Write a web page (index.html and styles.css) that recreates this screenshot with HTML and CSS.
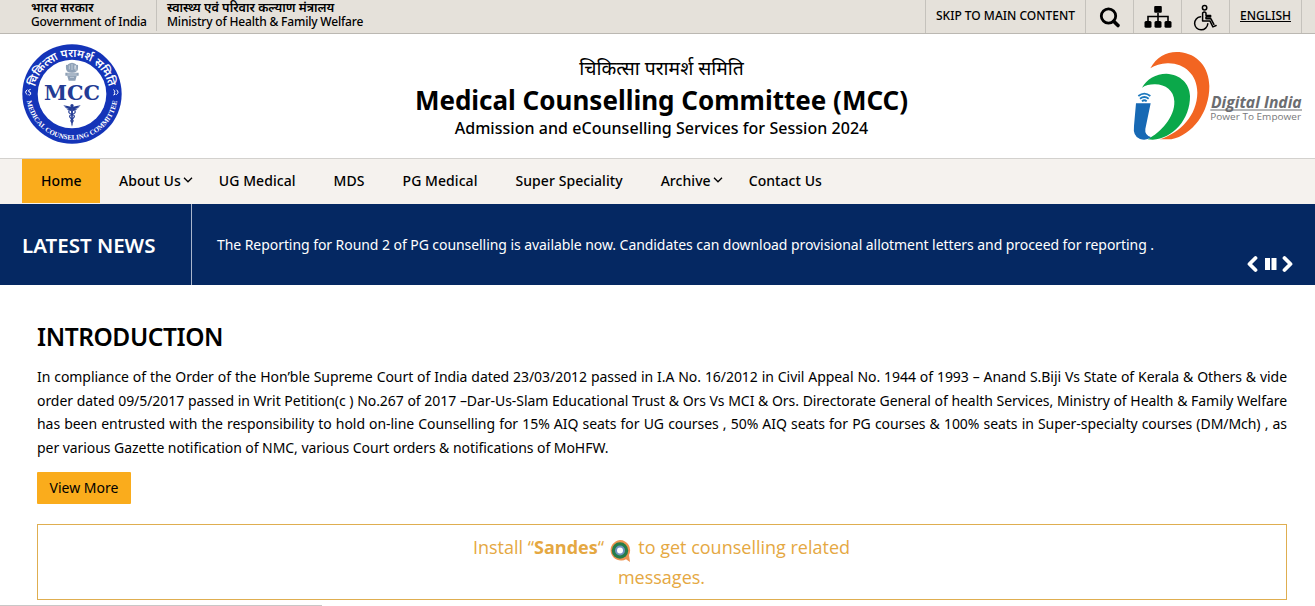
FILE: index.html
```html
<!DOCTYPE html>
<html lang="en">
<head>
  <meta charset="UTF-8">
  <meta name="viewport" content="width=device-width, initial-scale=1.0">
  <title>Medical Counselling Committee (MCC)</title>
  <link rel="stylesheet" href="styles.css">
</head>
<body>
  <div class="topbar">
    <div class="gov">
      <a class="gov-item gov-india"><span class="hi" lang="hi">भारत सरकार</span><span class="en">Government of India</span></a>
      <a class="gov-item gov-ministry"><span class="hi" lang="hi">स्वास्थ्य एवं परिवार कल्याण मंत्रालय</span><span class="en">Ministry of Health &amp; Family Welfare</span></a>
    </div>
    <ul class="tools">
      <li class="skip"><a>SKIP TO MAIN CONTENT</a></li>
      <li class="tool">
        <svg width="24" height="24" viewBox="0 0 24 24"><circle cx="10.500" cy="11" r="7.2" fill="none" stroke="#000" stroke-width="2.8"/><path d="M15.7 16.2L20 20.500" stroke="#000" stroke-width="3.6" stroke-linecap="round"/></svg>
      </li>
      <li class="tool">
        <svg width="28" height="24" viewBox="0 0 28 24"><path d="M14 8v8M4 16v-4.500h20V16" fill="none" stroke="#000" stroke-width="1.6"/><rect x="10.200" y="1" width="7.600" height="6.800" rx="1"/><rect x="0.500" y="16" width="7" height="6.800" rx="1.500"/><rect x="10.500" y="16" width="7" height="6.800" rx="1.500"/><rect x="20.500" y="16" width="7" height="6.800" rx="1.500"/></svg>
      </li>
      <li class="tool">
        <svg width="26" height="28" viewBox="0 0 26 28"><g fill="none" stroke="#000" stroke-width="1.5" stroke-linecap="round" stroke-linejoin="round"><circle cx="11.600" cy="4.800" r="2.200"/><path d="M9.600 10v7.900h7.300l3 6 3.200-1.400M13 10v2.400h4.600v1.600H13v1.800h5l2.900 5.500M9.600 10q1.700-2 3.400 0"/><path d="M7.600 13.700A6.600 6.600 0 1 0 14.800 20.800"/></g></svg>
      </li>
      <li class="lang"><a>ENGLISH</a></li>
    </ul>
  </div>

  <header class="header">
    <svg class="mcc" width="120" height="112" viewBox="0 0 360 336">
      <defs>
        <path id="arcTop" d="M70 190A112 112 0 1 1 290 190"/>
        <path id="arcBottom" d="M43 168A137 137 0 0 0 317 168"/>
      </defs>
      <circle cx="180" cy="168" r="149" fill="#1434b8"/>
      <circle cx="180" cy="168" r="103" fill="#fff"/>
      <text class="ring-hi" lang="hi"><textPath href="#arcTop" startOffset="50%" text-anchor="middle">चिकित्सा परामर्श समिति</textPath></text>
      <text class="ring-en"><textPath href="#arcBottom" startOffset="50%" text-anchor="middle">MEDICAL COUNSELING COMMITTEE</textPath></text>
      <g fill="none" stroke="#fff" stroke-width="3"><path d="M46 155q-10 8 0 15M56 154q-10 2-5 8 7-1 5 7-2 4-7 1M304 155q8 4 3 9 6 6-3 7M313 155q10 8 0 15"/></g>
      <g fill="#8fa1b6">
        <path d="M168 79q12-9 24 0l1 22q-13 6-26 0zM162 81q6-3 8 3l-2 18q-8-5-6-21zM198 81q-6-3-8 3l2 18q8-5 6-21z"/>
        <path d="M160 104h40v9h-40zM166 114h28l-4 14h-20z"/>
      </g>
      <path d="M172 82v12M180 78v18M188 82v12M166 108h28M174 118h12" stroke="#dbe2ea" stroke-width="2"/>
      <text class="mcc-name" x="96" y="186" textLength="168" lengthAdjust="spacingAndGlyphs">MCC</text>
      <g fill="#233b94">
        <circle cx="180" cy="203" r="5"/>
        <path d="M177 207h6l-1 52-2 7-2-7zM154 202q14 2 23 4v13q-11-1-13-5 5 0 7-1-10-1-13-5 4 0 7 0-9-1-11-6zM206 202q-14 2-23 4v13q11-1 13-5-5 0-7-1 10-1 13-5-4 0-7 0 9-1 11-6z"/>
        <path d="M172 218q-6 7 8 11t1 14q-9 5 0 11M188 218q6 7-8 11t-1 14q9 5 0 11" fill="none" stroke="#233b94" stroke-width="3.500"/>
      </g>
    </svg>
    <div class="title">
      <p class="title-hi" lang="hi">चिकित्सा परामर्श समिति</p>
      <h1>Medical Counselling Committee (MCC)</h1>
      <p class="title-sub">Admission and eCounselling Services for Session 2024</p>
    </div>
    <svg class="digital" width="195" height="108" viewBox="0 0 585 324">
      <path d="M91 79C111 42 143 27 178 30C232 35 267 75 268 132C269 211 217 279 154 292L120 292C183 270 231 220 232 152C232 96 190 62 142 64Q112 65 91 79Z" fill="#f26522"/>
      <path d="M66 137C80 111 108 95 139 95C181 97 209 125 210 162C211 232 158 290 98 293L83 292C121 272 165 226 163 178C162 145 135 126 103 127Q82 127 66 137Z" fill="#0ba84a"/>
      <path d="M48 184H92L76 261Q73 279 94 286Q78 297 60 291Q38 283 42 251Z" fill="#1769b4"/>
      <g fill="none" stroke="#1b78be" stroke-width="5.500"><path d="M55 162Q73 148 91 162M60 170Q73 160 86 170M66 178Q73 171 80 178"/></g>
      <text class="digital-name" x="273" y="197" textLength="272" lengthAdjust="spacingAndGlyphs">Digital India</text>
      <path d="M271 204H546" stroke="#6b6c70" stroke-width="3"/>
      <text class="digital-tag" x="271" y="233" textLength="272" lengthAdjust="spacingAndGlyphs">Power To Empower</text>
    </svg>
  </header>

  <nav class="nav">
    <a class="active">Home</a>
    <a class="has-sub">About Us<svg width="10" height="6" viewBox="0 0 10 6"><path d="M1 .8l4 4 4-4"/></svg></a>
    <a>UG Medical</a>
    <a>MDS</a>
    <a>PG Medical</a>
    <a>Super Speciality</a>
    <a class="has-sub">Archive<svg width="10" height="6" viewBox="0 0 10 6"><path d="M1 .8l4 4 4-4"/></svg></a>
    <a>Contact Us</a>
  </nav>

  <section class="news">
    <h2>LATEST NEWS</h2>
    <p>The Reporting for Round 2 of PG counselling is available now. Candidates can download provisional allotment letters and proceed for reporting .</p>
    <svg class="controls" width="48" height="18" viewBox="0 0 48 18"><path d="M9.500 3L3.500 9l6 6M38.500 3l6 6-6 6" fill="none" stroke="#fff" stroke-width="3.800" stroke-linecap="round" stroke-linejoin="round"/><path d="M19 3h5v12h-5zM25.500 3h5v12h-5z" fill="#fff"/></svg>
  </section>

  <main class="content">
    <h2>INTRODUCTION</h2>
    <div class="intro">
      <p class="full">In compliance of the Order of the Hon’ble Supreme Court of India dated 23/03/2012 passed in I.A No. 16/2012 in Civil Appeal No. 1944 of 1993 – Anand S.Biji Vs State of Kerala &amp; Others &amp; vide</p>
      <p class="full">order dated 09/5/2017 passed in Writ Petition(c ) No.267 of 2017 –Dar-Us-Slam Educational Trust &amp; Ors Vs MCI &amp; Ors. Directorate General of health Services, Ministry of Health &amp; Family Welfare</p>
      <p class="full">has been entrusted with the responsibility to hold on-line Counselling for 15% AIQ seats for UG courses , 50% AIQ seats for PG courses &amp; 100% seats in Super-specialty courses (DM/Mch) , as</p>
      <p>per various Gazette notification of NMC, various Court orders &amp; notifications of MoHFW.</p>
    </div>
    <a class="more">View More</a>
    <div class="sandes">
      <p>Install “<b>Sandes</b>“
        <svg width="22" height="24" viewBox="0 0 22 24"><path d="M11 1a10.300 10.300 0 1 0 6 19.200L21 23l-1-7A10.300 10.300 0 0 0 11 1z" fill="#ee9350"/><circle cx="11" cy="11.500" r="8.200" fill="#267d48"/><circle cx="11" cy="11.500" r="5" fill="#6f93bd"/><circle cx="11" cy="11.500" r="3" fill="#fff"/></svg>
        to get counselling related<br>messages.</p>
    </div>
  </main>
  <div class="strip"></div>
</body>
</html>
```
FILE: styles.css
```css
* {
  box-sizing: border-box;
  margin: 0;
  padding: 0;
}

body {
  height: 606px;
  overflow: hidden;
  display: flex;
  flex-direction: column;
  font-family: "Noto Sans", "Open Sans", sans-serif;
  color: #000;
  background: #fff;
}

svg {
  display: block;
  flex: none;
}

/* top bar */
.topbar {
  display: flex;
  justify-content: space-between;
  flex: none;
  height: 34px;
  background: #e5e1da;
  border-bottom: 1px solid #bbb8b2;
}

.gov {
  display: flex;
  height: 31px;
  padding-left: 22px;
}

.gov-item {
  display: flex;
  flex-direction: column;
  padding: 0 10px;
  font-size: 12px;
  font-weight: 500;
  white-space: nowrap;
}

.gov-india {
  width: 135px;
  padding-left: 9px;
  border-right: 1px solid #c5c2bc;
}

.gov-item .hi {
  height: 14px;
  font-size: 12.6px;
  font-weight: 600;
  line-height: 16px;
}

.gov-item .en {
  letter-spacing: -0.18px;
  line-height: 15px;
}

.tools {
  display: flex;
  list-style: none;
  margin-right: 13px;
  border-right: 1px solid #c5c2bc;
}

.tools li {
  display: flex;
  align-items: center;
  justify-content: center;
  width: 48px;
  border-left: 1px solid #c5c2bc;
  font-size: 12px;
  font-weight: 500;
  white-space: nowrap;
}

.tools .skip {
  width: 160px;
  padding-bottom: 2px;
}

.tools .tool {
  padding-top: 1px;
}

.tools .lang {
  width: 72px;
  padding-bottom: 2px;
  text-decoration: underline;
}

/* header */
.header {
  display: grid;
  grid-template-columns: 195px 1fr 195px;
  flex: none;
  height: 124px;
}

.mcc {
  margin: 4px 0 0 12px;
}

.digital {
  margin-top: 8px;
}

.ring-hi {
  font: 600 34px "Noto Sans", "Noto Sans Devanagari", sans-serif;
  fill: #fff;
}

.ring-en {
  font: bold 21px "Liberation Serif", serif;
  fill: #fff;
}

.mcc-name {
  font: bold 60px "DejaVu Serif", serif;
  fill: #233b94;
}

.digital-name {
  font: italic bold 46px "Open Sans", sans-serif;
  fill: #6b6c70;
}

.digital-tag {
  font: 29px "Open Sans", sans-serif;
  fill: #77787b;
}

.title {
  padding: 18px 0 0 8px;
  text-align: center;
}

.title-hi {
  height: 31px;
  font-size: 19.3px;
  line-height: 32px;
}

.title h1 {
  font-size: 26px;
  font-weight: 700;
  line-height: 34px;
}

.title-sub {
  font-size: 16px;
  font-weight: 500;
  letter-spacing: 0.04px;
  line-height: 22px;
}

/* menu */
.nav {
  display: flex;
  flex: none;
  height: 46px;
  padding-left: 22px;
  background: #f5f2ee;
  border-top: 1px solid #d3d1ce;
}

.nav a {
  display: flex;
  align-items: center;
  height: 44px;
  padding: 0 19px 2px;
  font-size: 14px;
  font-weight: 500;
  letter-spacing: 0.06px;
  white-space: nowrap;
}

.nav .active {
  width: 78px;
  background: #faac1c;
}

.nav .has-sub {
  gap: 2px;
  padding-right: 7px;
}

.nav path {
  fill: none;
  stroke: #000;
  stroke-width: 1.3;
}

/* news */
.news {
  display: flex;
  flex: none;
  height: 81px;
  padding-right: 21px;
  background: #052862;
  color: #fff;
}

.news h2 {
  width: 192px;
  padding-left: 22px;
  border-right: 1px solid #aab6cc;
  font-size: 20.5px;
  font-weight: 600;
  line-height: 82px;
}

.news p {
  flex: 1;
  padding-left: 25px;
  font-size: 14px;
  letter-spacing: -0.062px;
  line-height: 81px;
  white-space: nowrap;
}

.controls {
  margin-top: 51px;
}

/* content */
.content {
  display: flex;
  flex-direction: column;
  align-items: flex-start;
  flex: 1;
  padding: 32px 28px 0 37px;
}

.content h2 {
  font-size: 24.5px;
  font-weight: 600;
  letter-spacing: -0.42px;
  line-height: 40px;
}

.intro {
  width: 1250px;
  margin-top: 8px;
  font-size: 14px;
  letter-spacing: -0.055px;
  line-height: 23.7px;
  white-space: nowrap;
}

.intro .full {
  text-align-last: justify;
}

.more {
  width: 94px;
  height: 32px;
  margin-top: 12px;
  border-radius: 1px;
  background: #faac1c;
  font-size: 14px;
  line-height: 32px;
  text-align: center;
}

.sandes {
  width: 1250px;
  height: 76px;
  margin-top: 20px;
  padding: 7px 1px 0 0;
  border: 1px solid #dfae50;
  color: #e5a842;
  font: 18px/30px "Open Sans", sans-serif;
  text-align: center;
}

.sandes svg {
  display: inline-block;
  margin: -4px 3px -4px 0;
  vertical-align: -5px;
}

.strip {
  flex: none;
  width: 322px;
  height: 1px;
  margin-top: 4px;
  background: #c9c7c7;
}
```
